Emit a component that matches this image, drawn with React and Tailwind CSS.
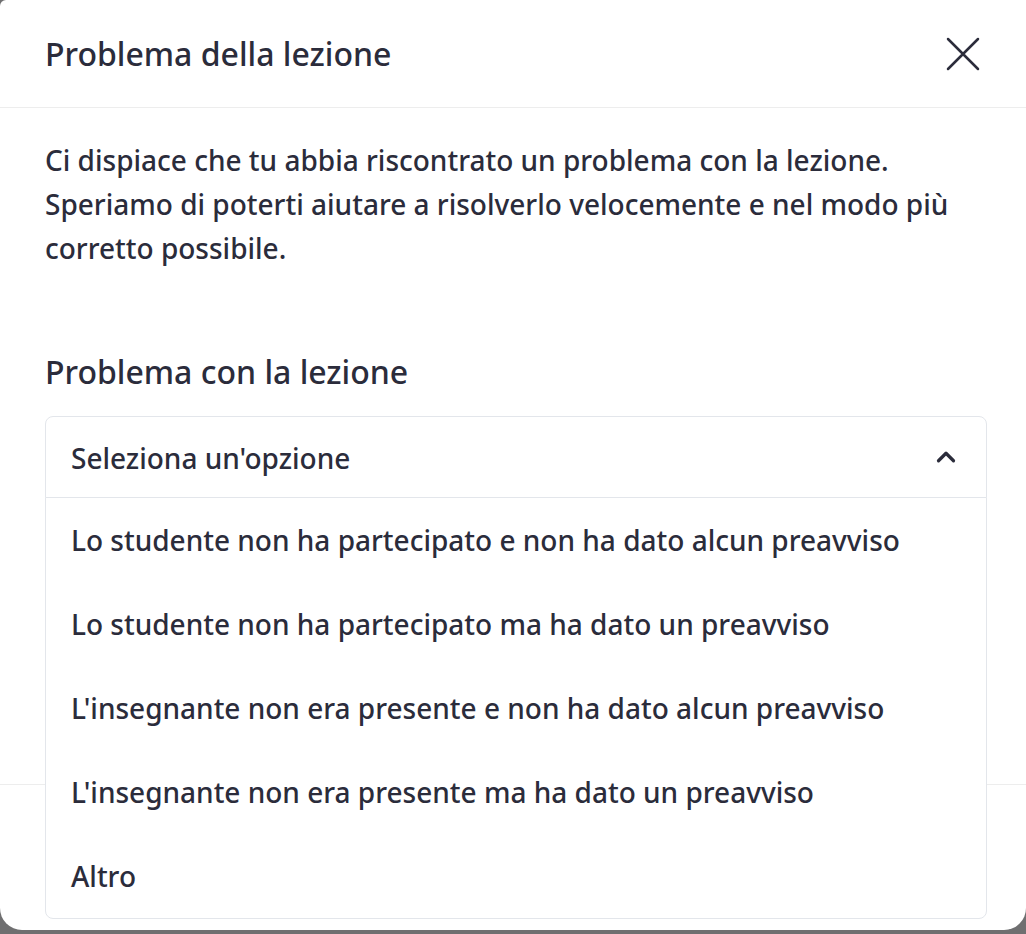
import { ChevronUp } from 'lucide-react';

const options = [
  'Lo studente non ha partecipato e non ha dato alcun preavviso',
  'Lo studente non ha partecipato ma ha dato un preavviso',
  "L'insegnante non era presente e non ha dato alcun preavviso",
  "L'insegnante non era presente ma ha dato un preavviso",
  'Altro',
];

function CloseIcon() {
  return (
    <svg width="34" height="34" viewBox="0 0 34 34" fill="none">
      <path d="M2 2 L32 32 M32 2 L2 32" stroke="#2b2c3b" strokeWidth="2.5" strokeLinecap="round" />
    </svg>
  );
}

function App() {
  return (
    <div className="h-[934px] w-full bg-[#6f6f70] overflow-hidden text-[#2b2c3b]" style={{ fontFamily: '"Noto Sans", "Open Sans", sans-serif' }}>
      <div className="h-[930px] bg-white rounded-tl-[6px] rounded-b-[22px] flex flex-col">
        <header className="h-[108px] shrink-0 flex items-center justify-between pl-[45px] pr-[46px] border-b border-[#ededed]">
          <h2 className="text-[32px] font-medium leading-none">Problema della lezione</h2>
          <button className="flex items-center justify-center">
            <CloseIcon />
          </button>
        </header>

        <div className="flex-1 pl-[45px] pr-[39px] pt-[30px]">
          <p className="text-[28px] font-medium leading-[44px]">
            Ci dispiace che tu abbia riscontrato un problema con la lezione.
            <br />
            Speriamo di poterti aiutare a risolverlo velocemente e nel modo più
            <br />
            corretto possibile.
          </p>

          <label className="block mt-[82px] mb-[24px] text-[32px] font-medium leading-[40px]">
            Problema con la lezione
          </label>

          <div className="relative">
            <button className="w-full h-[82px] flex items-center justify-between pl-[25px] pr-[25px] border border-[#e3e6eb] rounded-t-[8px] text-left">
              <span className="text-[28px] font-medium pt-[2px]">Seleziona un'opzione</span>
              <ChevronUp size={30} strokeWidth={2.6} className="text-[#2b2c3b]" />
            </button>
            <ul className="absolute left-0 right-0 top-full -mt-px bg-white border border-[#e3e6eb] rounded-b-[8px] z-10">
              {options.map((o) => (
                <li key={o} className="h-[84px] flex items-center pl-[25px] text-[28px] font-medium">
                  {o}
                </li>
              ))}
            </ul>
          </div>
        </div>

        <footer className="h-[146px] shrink-0 border-t border-[#ededed]" />
      </div>
    </div>
  );
}

export default App;
